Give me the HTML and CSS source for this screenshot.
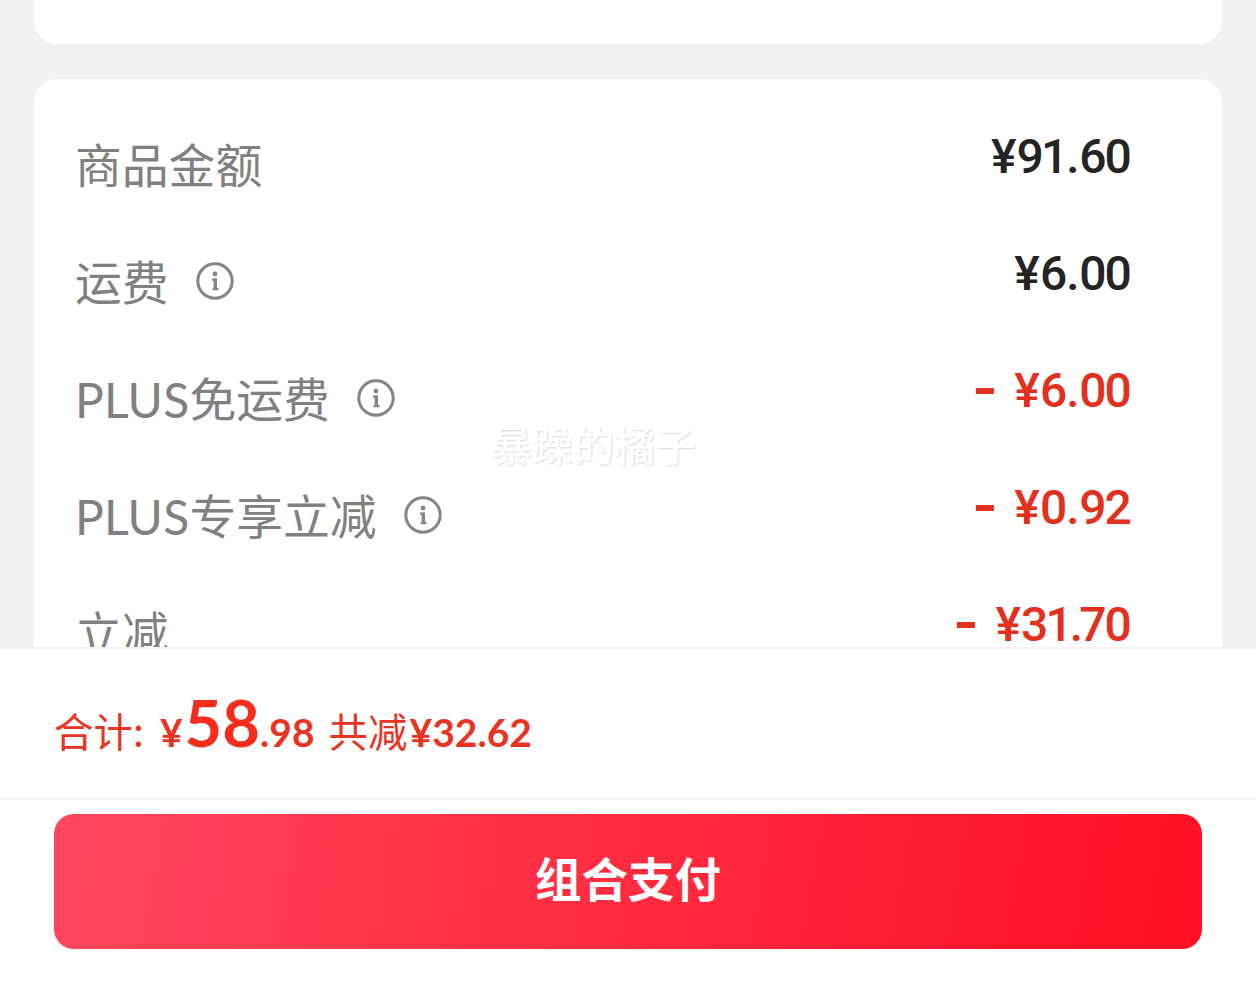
FILE: index.html
```
<!DOCTYPE html>
<html lang="zh-CN">
<head>
    <meta charset="UTF-8">
    <meta name="viewport" content="width=device-width, initial-scale=1.0">
    <title>确认订单</title>
    <link rel="stylesheet" href="styles.css">
</head>
<body>

<svg width="0" height="0" class="icon-defs">
    <symbol id="icon-info" viewBox="0 0 38 38">
        <circle cx="19" cy="19" r="17.2" fill="none" stroke="currentColor" stroke-width="3"/>
        <circle cx="19" cy="12" r="2.4" fill="currentColor"/>
        <path d="M16 17.6H19.3V27M16.6 27.2H22.4" fill="none" stroke="currentColor" stroke-width="2.2"/>
        <path d="M19.3 16.6V28" fill="none" stroke="currentColor" stroke-width="3.4"/>
    </symbol>
</svg>

<div class="content">
    <div class="card card-prev"></div>
    <div class="card">
        <div class="row">
            <span class="label">商品金额</span>
            <span class="price"><span class="yen">¥</span>9<span class="one">1</span><span class="dot">.</span>60</span>
        </div>
        <div class="row">
            <span class="label">运费</span>
            <svg class="icon"><use href="#icon-info"/></svg>
            <span class="price"><span class="yen">¥</span>6<span class="dot">.</span>00</span>
        </div>
        <div class="row">
            <span class="label"><span class="latin">PLUS</span>免运费</span>
            <svg class="icon"><use href="#icon-info"/></svg>
            <span class="price discount"><span class="minus">-</span><span class="yen">¥</span>6<span class="dot">.</span>00</span>
        </div>
        <div class="row">
            <span class="label"><span class="latin">PLUS</span>专享立减</span>
            <svg class="icon"><use href="#icon-info"/></svg>
            <span class="price discount"><span class="minus">-</span><span class="yen">¥</span>0<span class="dot">.</span>92</span>
        </div>
        <div class="row">
            <span class="label">立减</span>
            <span class="price discount"><span class="minus">-</span><span class="yen">¥</span>3<span class="one">1</span><span class="dot dot-tight">.</span>70</span>
        </div>
    </div>
    <div class="watermark">暴躁的橘子</div>
</div>

<div class="total">
    <span class="total-label">合计:</span>
    <span class="total-yen">¥</span>
    <span class="total-int">58</span>
    <span class="total-dec">.98</span>
    <span class="saved">共减</span>
    <span class="saved-price">¥32.62</span>
</div>

<div class="pay-bar">
    <button class="pay-button">组合支付</button>
</div>

</body>
</html>
```

FILE: styles.css
```
* {
    box-sizing: border-box;
}
body {
    margin: 0;
    height: 990px;
    overflow: hidden;
    background-color: #fff;
    font-family: "Noto Sans CJK SC", sans-serif;
}
.icon-defs {
    display: block;
}
.content {
    position: relative; /* 水印的定位参考 */
    height: 647px;
    padding: 0 34px;
    overflow: hidden;
    background-color: #f1f1f1;
}
.card {
    padding: 25px 92px 0 42px;
    border-radius: 24px;
    background-color: #fff;
}
.card-prev {
    height: 44px;
    margin-bottom: 35px;
    padding: 0;
    border-radius: 0 0 24px 24px;
}
.row {
    display: flex;
    align-items: center;
    height: 117px;
}
.label {
    margin-left: -1px;
    color: #808080;
    font-size: 46.8px;
    line-height: 60px;
}
.latin {
    font-family: Lato, sans-serif;
    font-size: 48px;
    line-height: 1;
    letter-spacing: 0.2px;
    vertical-align: -1px;
}
.icon {
    width: 38px;
    height: 38px;
    margin: 2px 0 0 27px;
    color: #858585;
}
.price {
    margin-left: auto;
    padding-bottom: 12px;
    color: #242424;
    font-family: Roboto, sans-serif;
    font-size: 48px;
    font-weight: 500;
    line-height: 60px;
    letter-spacing: -1.9px;
}
.discount {
    color: #e1301e;
}
.yen {
    margin-right: 2px;
}
.dot {
    margin: 0 1.5px 0 1px;
}
.dot-tight {
    margin: 0 -2px 0 0;
}
.one {
    margin: 0 -1px 0 -1px;
}
.minus {
    margin-right: 18px;
    font-family: Lato, sans-serif;
    font-size: 72px;
    line-height: 0;
    vertical-align: -6px;
}
.watermark {
    position: absolute;
    top: 413px;
    left: 491px;
    color: #fff;
    font-size: 41px;
    font-weight: 500;
    line-height: 60px;
    text-shadow: 1px 1px 2px #d8d8e0;
}
.total {
    display: flex;
    align-items: baseline;
    height: 151px;
    padding: 28px 54px 0;
    border-top: 2px solid #f3f3f3;
    color: #e93323;
    font-family: Lato, "Noto Sans CJK SC", sans-serif;
    line-height: 90px;
}
.total-label, .saved {
    font-family: "Noto Sans CJK SC", sans-serif;
    font-size: 39.5px;
}
.total-yen {
    margin-left: 16px;
    font-size: 39px;
    font-weight: bold;
}
.total-int {
    margin-left: 2px;
    color: #f52d1d;
    font-size: 65px;
    font-weight: bold;
}
.total-dec, .saved-price {
    font-size: 39px;
    font-weight: bold;
}
.saved {
    margin-left: 14px;
}
.saved-price {
    margin-left: 2px;
}
.pay-bar {
    height: 192px;
    padding: 14px 54px 0;
    border-top: 2px solid #f5f5f5;
}
.pay-button {
    display: block;
    width: 100%;
    height: 135px;
    padding: 0 0 10px;
    border: none;
    border-radius: 20px;
    background: linear-gradient(100deg, #ff475d, #ff0f23);
    color: #fff;
    font-family: "Noto Sans CJK SC", sans-serif;
    font-size: 46.5px;
    font-weight: bold;
    cursor: pointer;
}
```
